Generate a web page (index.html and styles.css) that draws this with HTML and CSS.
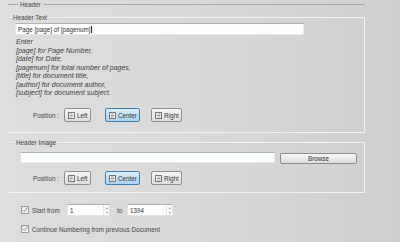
FILE: index.html
```html
<!DOCTYPE html>
<html>
<head>
<meta charset="utf-8">
<link rel="stylesheet" href="styles.css">
</head>
<body>
<div class="page">
  <fieldset class="outer">
    <legend>Header</legend>
    <fieldset class="panel p1">
      <legend>Header Text</legend>
      <div class="textbox tb-text">Page [page] of [pagenum]<span class="caret"></span></div>
      <div class="hint">Enter<br>[page] for Page Number,<br>[date] for Date,<br>[pagenum] for total number of pages,<br>[title] for document title,<br>[author] for document author,<br>[subject] for document subject.</div>
      <div class="posrow">
        <span class="poslabel">Position :</span>
        <div class="btn b-left"><svg width="7" height="7" viewBox="0 0 7 7"><rect x="0.5" y="0.5" width="6" height="6" fill="#fff" stroke="#777"/><path d="M1.5 2h3M1.5 3.5h4M1.5 5h3" stroke="#777" stroke-width="0.7"/></svg>Left</div>
        <div class="btn b-center active"><svg width="7" height="7" viewBox="0 0 7 7"><rect x="0.5" y="0.5" width="6" height="6" fill="#fff" stroke="#777"/><path d="M2 2h3M1.5 3.5h4M2 5h3" stroke="#777" stroke-width="0.7"/></svg>Center</div>
        <div class="btn b-right"><svg width="7" height="7" viewBox="0 0 7 7"><rect x="0.5" y="0.5" width="6" height="6" fill="#fff" stroke="#777"/><path d="M2.5 2h3M1.5 3.5h4M2.5 5h3" stroke="#777" stroke-width="0.7"/></svg>Right</div>
      </div>
    </fieldset>
    <fieldset class="panel p2">
      <legend>Header Image</legend>
      <div class="imgrow">
        <div class="textbox tb-img"></div>
        <div class="browse">Browse</div>
      </div>
      <div class="posrow pos2">
        <span class="poslabel">Position :</span>
        <div class="btn b-left"><svg width="7" height="7" viewBox="0 0 7 7"><rect x="0.5" y="0.5" width="6" height="6" fill="#fff" stroke="#777"/><path d="M1.5 2h3M1.5 3.5h4M1.5 5h3" stroke="#777" stroke-width="0.7"/></svg>Left</div>
        <div class="btn b-center active"><svg width="7" height="7" viewBox="0 0 7 7"><rect x="0.5" y="0.5" width="6" height="6" fill="#fff" stroke="#777"/><path d="M2 2h3M1.5 3.5h4M2 5h3" stroke="#777" stroke-width="0.7"/></svg>Center</div>
        <div class="btn b-right"><svg width="7" height="7" viewBox="0 0 7 7"><rect x="0.5" y="0.5" width="6" height="6" fill="#fff" stroke="#777"/><path d="M2.5 2h3M1.5 3.5h4M2.5 5h3" stroke="#777" stroke-width="0.7"/></svg>Right</div>
      </div>
    </fieldset>
  </fieldset>
  <div class="startrow">
    <span class="check"><svg width="6" height="6" viewBox="0 0 6 6"><path d="M0.8 3.2l1.6 1.6 2.8-4" fill="none" stroke="#8a8a8a" stroke-width="0.9"/></svg></span>
    <span class="startlabel">Start from</span>
    <div class="spin sp1"><span class="val">1</span><span class="arrows"><i>&#9652;</i><i>&#9662;</i></span></div>
    <span class="to">to</span>
    <div class="spin sp2"><span class="val">1394</span><span class="arrows"><i>&#9652;</i><i>&#9662;</i></span></div>
  </div>
  <div class="controw">
    <span class="check"><svg width="6" height="6" viewBox="0 0 6 6"><path d="M0.8 3.2l1.6 1.6 2.8-4" fill="none" stroke="#8a8a8a" stroke-width="0.9"/></svg></span>
    <span class="contlabel">Continue Numbering from previous Document</span>
  </div>
</div>
</body>
</html>
```

FILE: styles.css
```css
html, body {
  margin: 0;
  padding: 0;
}
body {
  width: 400px;
  height: 242px;
  overflow: hidden;
  font-family: "Liberation Sans", Arial, sans-serif;
  font-size: 6.3px;
  color: #444;
  background: linear-gradient(to right, #dedede 0%, #d9d9d9 50%, #cfcfcf 100%);
}
.page {
  width: 400px;
  height: 242px;
}
fieldset {
  box-sizing: border-box;
  min-inline-size: 0;
  margin: 0;
  padding: 0;
}
legend {
  line-height: 9px;
  font-size: 6.3px;
  padding: 0 1px;
  color: #444;
}
.outer {
  margin-left: 8px;
  width: 357px;
  border: 0;
  border-top: 1px solid #a6a6a6;
}
.outer > legend {
  margin-left: 10px;
  padding: 0 2px;
}
.panel {
  margin-left: 1px;
  width: 356px;
  border: 1px solid #f3f3f3;
  border-left: 0;
  box-shadow: 0 1px 0 #d2d2d2 inset, -1px 0 0 #d2d2d2 inset;
}
.p1 {
  margin-top: 4px;
  padding-bottom: 10px;
}
.p1 > legend {
  margin-left: 3px;
}
.p2 {
  margin-top: 5px;
  padding-bottom: 7px;
}
.p2 > legend {
  margin-left: 6px;
}
.textbox {
  box-sizing: border-box;
  background: #fdfefe;
  border: 1px solid #e6e9e8;
  border-top-color: #aab3b1;
  display: flex;
  align-items: center;
  padding-left: 2px;
  color: #333;
}
.tb-text {
  margin-top: 1px;
  margin-left: 6px;
  width: 289px;
  height: 12px;
}
.caret {
  display: inline-block;
  width: 1px;
  height: 7px;
  background: #222;
  margin-left: 1px;
}
.hint {
  margin-top: 3px;
  margin-left: 7px;
  font-style: italic;
  font-size: 7px;
  line-height: 8.5px;
  color: #404040;
}
.posrow {
  display: flex;
  align-items: center;
  margin-top: 10.5px;
  height: 14px;
}
.pos2 {
  margin-top: 7px;
}
.poslabel {
  margin-left: 24px;
  width: 31px;
  color: #4a4a4a;
}
.btn {
  box-sizing: border-box;
  height: 14px;
  display: flex;
  align-items: center;
  gap: 2px;
  padding-left: 3px;
  border: 1px solid #8e8e8e;
  border-radius: 2px;
  background: linear-gradient(#f7f7f7, #dddddd);
  color: #333;
}
.btn svg {
  flex: none;
}
.b-left { width: 27px; }
.b-center { width: 35px; margin-left: 14px; }
.b-right { width: 31px; margin-left: 11px; }
.btn.active {
  border-color: #3f7eaf;
  background: linear-gradient(#dbeefb, #a8d2f0);
}
.imgrow {
  display: flex;
  align-items: flex-start;
  margin-top: 5px;
  margin-left: 11px;
}
.tb-img {
  width: 255px;
  height: 11px;
}
.browse {
  box-sizing: border-box;
  margin-left: 5px;
  margin-top: 1px;
  width: 77px;
  height: 11px;
  border: 1px solid #8c8c8c;
  border-radius: 2px;
  background: linear-gradient(#f6f6f6, #dcdcdc);
  display: flex;
  align-items: center;
  justify-content: center;
  color: #333;
}
.startrow {
  display: flex;
  align-items: center;
  margin-top: 11px;
  margin-left: 21px;
  height: 12px;
}
.check {
  box-sizing: border-box;
  width: 8px;
  height: 8px;
  border: 1px solid #9a9a9a;
  background: linear-gradient(#e9e9e9, #f7f7f7);
  display: flex;
  align-items: center;
  justify-content: center;
  flex: none;
}
.startlabel {
  margin-left: 3px;
  width: 35px;
}
.spin {
  box-sizing: border-box;
  height: 12px;
  background: #fdfdfd;
  border: 1px solid #e3e3e3;
  border-top-color: #adadad;
  display: flex;
  align-items: center;
  justify-content: space-between;
  padding-left: 2px;
  color: #333;
}
.sp1 { width: 43px; }
.sp2 { width: 46px; }
.arrows {
  display: flex;
  flex-direction: column;
  width: 5px;
  height: 10px;
  border-left: 1px solid #e6e6e6;
  font-size: 4px;
  line-height: 5px;
  color: #9a9a9a;
  text-align: center;
}
.arrows i {
  font-style: normal;
}
.to {
  margin-left: 7px;
  width: 10px;
}
.controw {
  display: flex;
  align-items: center;
  margin-top: 8px;
  margin-left: 21px;
  height: 10px;
}
.contlabel {
  margin-left: 3px;
}
```
